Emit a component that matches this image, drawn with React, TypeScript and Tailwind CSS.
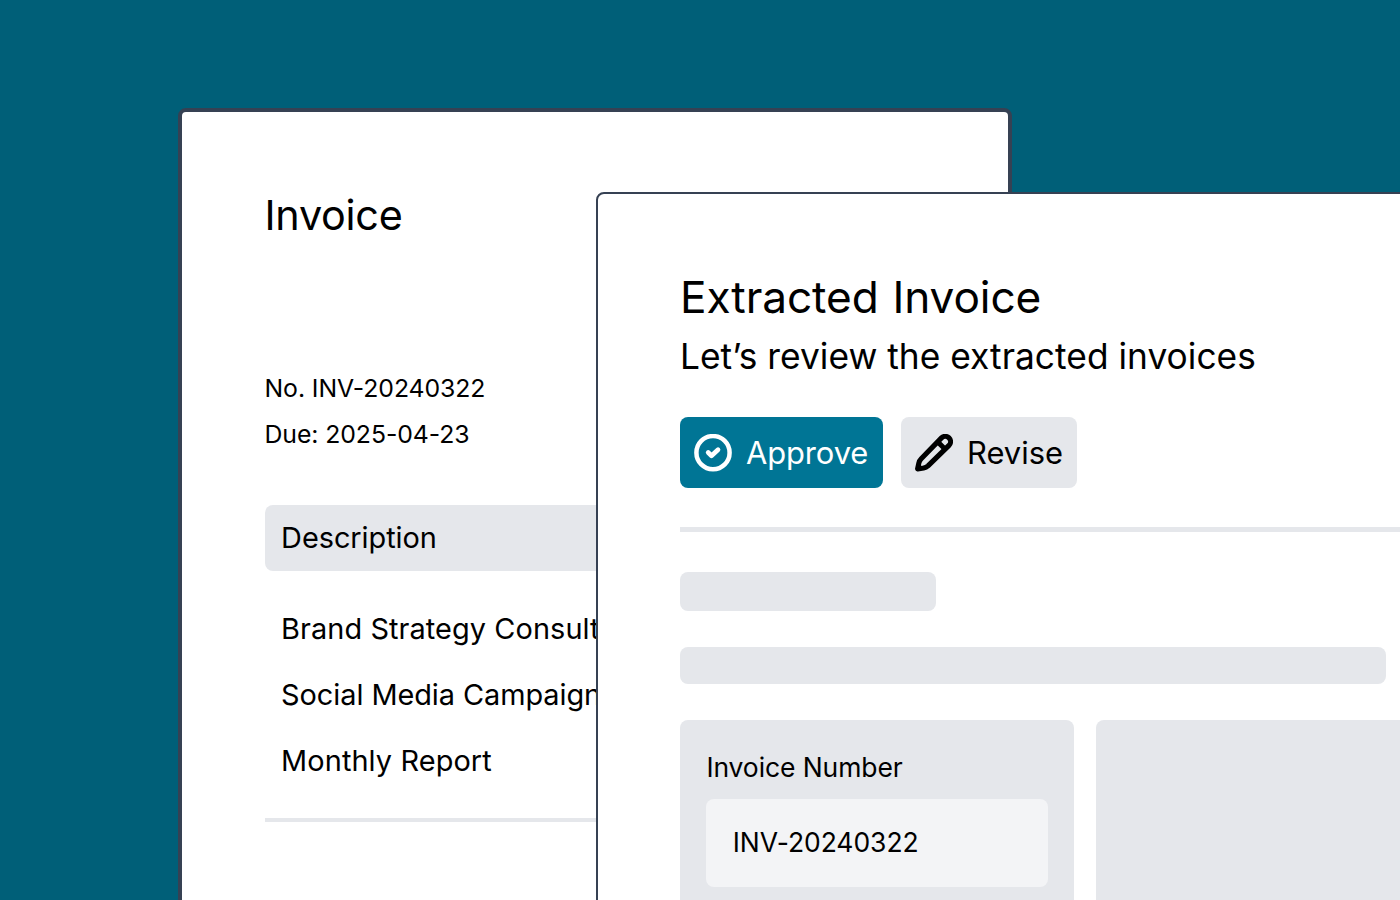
import React from "react";

const items = [
  { name: "Brand Strategy Consulting", spacing: "tracking-[0.08px]" },
  { name: "Social Media Campaign", spacing: "tracking-[-0.06px]" },
  { name: "Monthly Report", spacing: "tracking-[0.1px]" },
];

function CheckCircleIcon() {
  return (
    <svg className="h-[38px] w-[38px] shrink-0" viewBox="0 0 38 38" fill="none" stroke="currentColor">
      <circle cx="19" cy="18.7" r="16.6" strokeWidth="4.5" />
      <path d="M14.2 18.5 17.5 21.8 24 15.7" strokeWidth="4.7" strokeLinecap="round" strokeLinejoin="round" />
    </svg>
  );
}

function PencilIcon() {
  return (
    <svg className="h-[38px] w-[38px] shrink-0" viewBox="0 0 38 38" fill="none" stroke="currentColor" strokeWidth="5.1" strokeLinejoin="round">
      <path d="M2.6 34.9 3.8 29.2Q4.4 26.6 6.2 24.8L26.5 3.9A5.3 5.3 0 0 1 34 11.4L13 31.8Q11.2 33.4 8.6 33.9Z" />
      <path d="M22.6 7.7 30.2 15.3" />
    </svg>
  );
}

function InvoiceDocument() {
  return (
    <section className="col-start-1 row-start-1 ml-[178px] mt-[108px] h-[900px] w-[834px] rounded-lg border-4 border-gray-700 bg-white pl-[82.5px] pr-[82.5px] pt-[81.5px]">
      <h1 className="text-[41.3px] leading-[42px] tracking-[-0.25px]">Invoice</h1>
      <div className="mt-[132px] flex flex-col gap-[5px] text-[24.8px] leading-[41px] tracking-[-0.08px]">
        <p>No. INV-20240322</p>
        <p>Due: 2025-04-23</p>
      </div>
      <div className="mt-[50.5px] flex h-[66px] items-center rounded-lg bg-gray-200 px-[16.6px] pb-px text-[28.9px] tracking-[-0.05px]">Description</div>
      <ul className="mt-[24.3px] px-[16.6px] text-[28.9px]">
        {items.map((item) => (
          <li key={item.name} className={`flex h-[66px] items-center whitespace-nowrap ${item.spacing}`}>{item.name}</li>
        ))}
      </ul>
      <div className="mt-[25px] h-1 bg-gray-200" />
    </section>
  );
}

function ExtractedPanel() {
  return (
    <section className="col-start-1 row-start-1 ml-[596px] mt-[192px] h-[900px] w-[1000px] rounded-lg border-2 border-gray-700 bg-white pl-[82px] pt-[81px]">
      <h2 className="text-[44.2px] leading-[44px] tracking-[-0.1px] [word-spacing:1.5px]">Extracted Invoice</h2>
      <p className="mt-[13px] text-[35.3px] leading-[50px] tracking-[0.03px]">Let’s review the extracted invoices</p>
      <div className="mt-[35px] flex gap-[17.6px] text-[30.9px]">
        <button className="flex h-[71px] w-[203px] items-center gap-[14px] rounded-lg bg-cyan-700 pl-[14px] text-white">
          <CheckCircleIcon />
          <span className="pt-px tracking-[-0.1px]">Approve</span>
        </button>
        <button className="flex h-[71px] w-[176.6px] items-center gap-[14.4px] rounded-lg bg-gray-200 pl-[14px]">
          <PencilIcon />
          <span className="pt-px">Revise</span>
        </button>
      </div>
      <div className="mt-[39px] h-[5px] bg-gray-200" />
      <div className="mt-[40px] h-[39px] w-[256px] rounded-lg bg-gray-200" />
      <div className="mt-[36px] h-[37px] w-[706px] rounded-lg bg-gray-200" />
      <div className="mt-[35.6px] flex gap-[22px]">
        <div className="h-[360px] w-[394px] rounded-lg bg-gray-200 px-[26.4px] pt-[26.4px] text-[26.5px]">
          <p className="leading-[42px] tracking-[-0.1px]">Invoice Number</p>
          <div className="mt-[10.6px] flex h-[88.4px] items-center rounded-lg bg-gray-100 pl-[26.4px] tracking-[-0.05px]">INV-20240322</div>
        </div>
        <div className="h-[360px] w-[394px] rounded-lg bg-gray-200" />
      </div>
    </section>
  );
}

export default function App() {
  return (
    <main className="grid h-[900px] w-[1400px] grid-cols-[1400px] grid-rows-[900px] overflow-hidden bg-cyan-800 font-[Inter,sans-serif] text-black">
      <InvoiceDocument />
      <ExtractedPanel />
    </main>
  );
}
